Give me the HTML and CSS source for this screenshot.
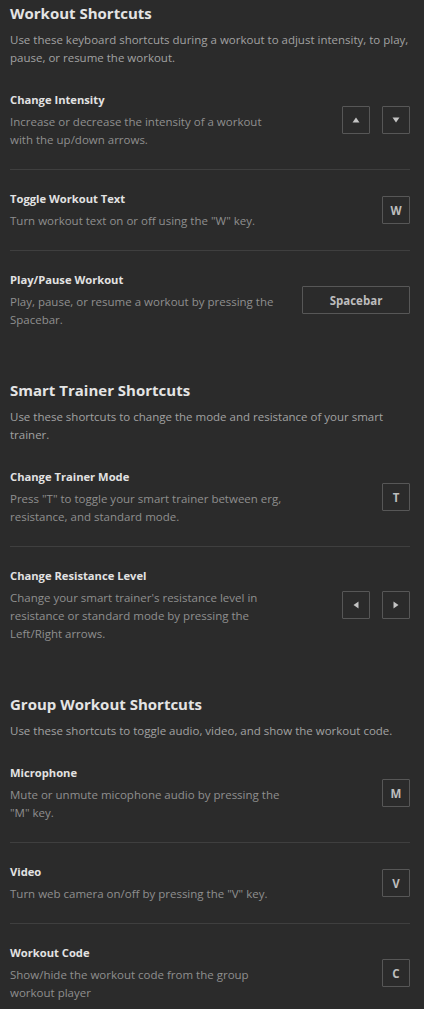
FILE: index.html
```html
<!DOCTYPE html>
<html lang="en">
<head>
<meta charset="utf-8">
<title>Keyboard Shortcuts</title>
<link rel="stylesheet" href="styles.css">
</head>
<body>
<main class="page">
  <section class="section">
    <h2 class="section-title">Workout Shortcuts</h2>
    <p class="section-desc">Use these keyboard shortcuts during a workout to adjust intensity, to play, pause, or resume the workout.</p>
    <div class="row">
      <div class="text">
        <h3 class="row-title">Change Intensity</h3>
        <p class="row-desc">Increase or decrease the intensity of a workout with the up/down arrows.</p>
      </div>
      <div class="keys">
        <span class="key"><svg class="tri" viewBox="0 0 8 8"><path d="M4 1.5 L7.5 6.5 L0.5 6.5 Z"/></svg></span>
        <span class="key"><svg class="tri" viewBox="0 0 8 8"><path d="M0.5 1.5 L7.5 1.5 L4 6.5 Z"/></svg></span>
      </div>
    </div>
    <div class="row">
      <div class="text">
        <h3 class="row-title">Toggle Workout Text</h3>
        <p class="row-desc">Turn workout text on or off using the "W" key.</p>
      </div>
      <div class="keys"><span class="key">W</span></div>
    </div>
    <div class="row">
      <div class="text">
        <h3 class="row-title">Play/Pause Workout</h3>
        <p class="row-desc">Play, pause, or resume a workout by pressing the Spacebar.</p>
      </div>
      <div class="keys"><span class="key key-wide">Spacebar</span></div>
    </div>
  </section>

  <section class="section">
    <h2 class="section-title">Smart Trainer Shortcuts</h2>
    <p class="section-desc">Use these shortcuts to change the mode and resistance of your smart trainer.</p>
    <div class="row">
      <div class="text">
        <h3 class="row-title">Change Trainer Mode</h3>
        <p class="row-desc">Press "T" to toggle your smart trainer between erg, resistance, and standard mode.</p>
      </div>
      <div class="keys"><span class="key">T</span></div>
    </div>
    <div class="row">
      <div class="text">
        <h3 class="row-title">Change Resistance Level</h3>
        <p class="row-desc">Change your smart trainer's resistance level in resistance or standard mode by pressing the Left/Right arrows.</p>
      </div>
      <div class="keys">
        <span class="key"><svg class="tri" viewBox="0 0 8 8"><path d="M1.5 4 L6.5 0.5 L6.5 7.5 Z"/></svg></span>
        <span class="key"><svg class="tri" viewBox="0 0 8 8"><path d="M1.5 0.5 L6.5 4 L1.5 7.5 Z"/></svg></span>
      </div>
    </div>
  </section>

  <section class="section">
    <h2 class="section-title">Group Workout Shortcuts</h2>
    <p class="section-desc">Use these shortcuts to toggle audio, video, and show the workout code.</p>
    <div class="row">
      <div class="text">
        <h3 class="row-title">Microphone</h3>
        <p class="row-desc">Mute or unmute micophone audio by pressing the "M" key.</p>
      </div>
      <div class="keys"><span class="key">M</span></div>
    </div>
    <div class="row">
      <div class="text">
        <h3 class="row-title">Video</h3>
        <p class="row-desc">Turn web camera on/off by pressing the "V" key.</p>
      </div>
      <div class="keys"><span class="key">V</span></div>
    </div>
    <div class="row">
      <div class="text">
        <h3 class="row-title">Workout Code</h3>
        <p class="row-desc">Show/hide the workout code from the group workout player</p>
      </div>
      <div class="keys"><span class="key">C</span></div>
    </div>
  </section>
</main>
</body>
</html>
```
FILE: styles.css
```css
* { box-sizing: border-box; }
html, body { margin: 0; padding: 0; background: #2b2b2b; }
body { font-family: "Open Sans", "Liberation Sans", sans-serif; color: #dedede; }
.page { padding: 1px 14px 0 10px; }
.section { padding-bottom: 29px; }
.section-title {
  margin: 0;
  font-size: 15px;
  line-height: 24px;
  font-weight: 700;
  color: #e4e4e4;
}
.section-desc {
  margin: 6px 0 4px;
  font-size: 11.5px;
  line-height: 18px;
  color: #a2a2a2;
}
.row {
  display: flex;
  align-items: center;
  justify-content: space-between;
  padding: 20px 0;
}
.row + .row { border-top: 1px solid #3f3f3f; }
.text { max-width: 275px; }
.row-title {
  margin: 0 0 4px;
  font-size: 11.2px;
  line-height: 18px;
  font-weight: 700;
  color: #e2e2e2;
}
.row-desc {
  margin: 0;
  font-size: 11.5px;
  line-height: 18px;
  color: #8f8f8f;
}
.keys { display: flex; gap: 12px; }
.key {
  display: flex;
  align-items: center;
  justify-content: center;
  width: 28px;
  height: 28px;
  border: 1px solid #575757;
  border-radius: 1px;
  font-size: 11.5px;
  font-weight: 700;
  color: #bdbdbd;
}
.key-wide { width: 108px; }
.tri { width: 8px; height: 8px; fill: #c4c4c4; }
```
